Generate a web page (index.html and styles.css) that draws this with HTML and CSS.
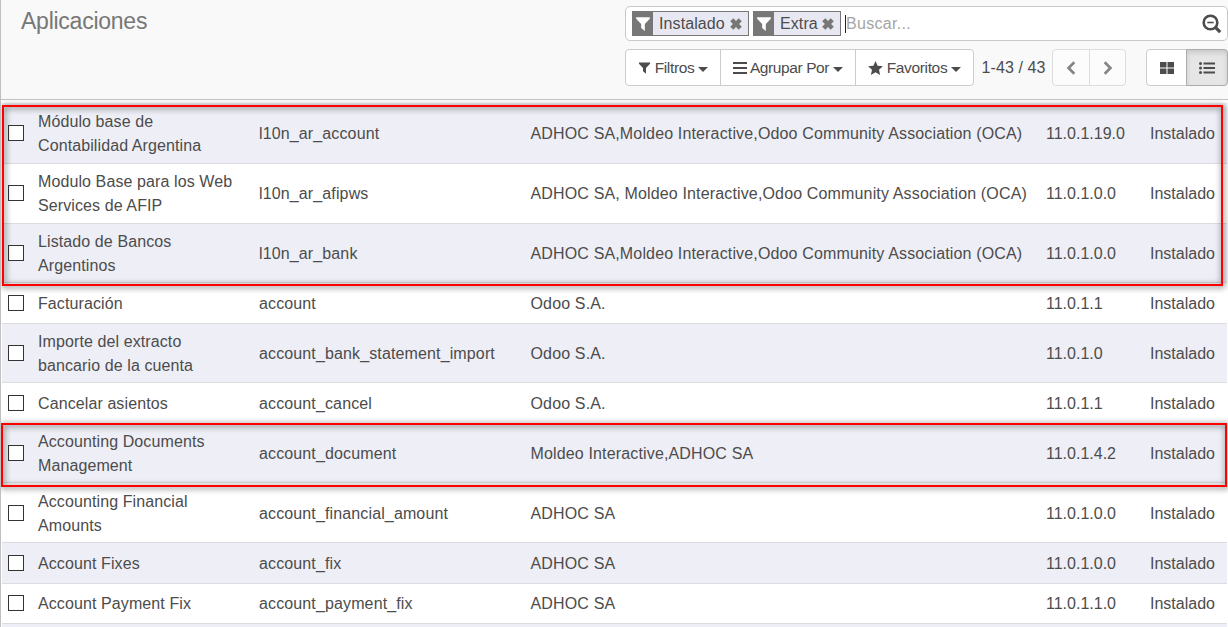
FILE: index.html
```
<!DOCTYPE html>
<html lang="es">
<head>
<meta charset="utf-8">
<title>Aplicaciones</title>
<link rel="stylesheet" href="styles.css">
</head>
<body>
<svg class="defs" width="0" height="0">
  <symbol id="funnel" viewBox="0 0 14 14"><path d="M1 1h12v1.500L8.600 7v6.200L5.400 10.600V7L1 2.500z"/></symbol>
  <symbol id="times" viewBox="0 0 12 12"><path d="M3.300.200 6 2.900 8.700.200l3.100 3.100L9.100 6l2.700 2.700-3.100 3.100L6 9.100l-2.700 2.700L.200 8.700 2.900 6 .200 3.300z"/></symbol>
</svg>
<div class="app">
  <header class="panel">
    <h1 class="title">Aplicaciones</h1>
    <div class="controls">
      <div class="search">
        <div class="facet"><span class="facet-icon"><svg width="16" height="16"><use href="#funnel"/></svg></span><span class="facet-label">Instalado</span><svg class="remove" width="12" height="12"><use href="#times"/></svg></div>
        <div class="facet extra"><span class="facet-icon"><svg width="16" height="16"><use href="#funnel"/></svg></span><span class="facet-label">Extra</span><svg class="remove" width="12" height="12"><use href="#times"/></svg></div>
        <span class="caret"></span><span class="placeholder">Buscar...</span>
        <svg class="magnifier" width="20" height="20" viewBox="0 0 20 20"><circle cx="8.500" cy="8.500" r="6.800" fill="none" stroke="currentColor" stroke-width="2.600"/><path d="M5.300 8.500h6.400" stroke="currentColor" stroke-width="1.600"/><path d="m13.400 13.400 4.800 4.800" stroke="currentColor" stroke-width="3.200"/></svg>
      </div>
      <div class="tools">
        <div class="group filters">
          <button class="btn filter"><svg width="13" height="14" viewBox="0 0 14 14"><use href="#funnel"/></svg><span>Filtros</span><i class="down"></i></button>
          <button class="btn grouping"><svg width="14" height="12" viewBox="0 0 14 12"><path d="M0 0h14v2H0zM0 5h14v2H0zM0 10h14v2H0z"/></svg><span>Agrupar Por</span><i class="down"></i></button>
          <button class="btn favorite"><svg width="15" height="14" viewBox="0 0 15 14"><path d="m7.500 0 2.100 4.700 5.300.600-3.900 3.500 1.100 5.200-4.600-2.700L2.900 14 4 8.800.100 5.300l5.300-.600z"/></svg><span>Favoritos</span><i class="down"></i></button>
        </div>
        <span class="count">1-43 / 43</span>
        <div class="group pager">
          <button class="btn"><svg width="10" height="14" viewBox="0 0 10 14"><path d="M8.300 1.300 2.600 7l5.700 5.700" fill="none" stroke="currentColor" stroke-width="2.700"/></svg></button>
          <button class="btn"><svg width="10" height="14" viewBox="0 0 10 14"><path d="M1.700 1.300 7.400 7l-5.700 5.700" fill="none" stroke="currentColor" stroke-width="2.700"/></svg></button>
        </div>
        <div class="group views">
          <button class="btn"><svg width="14" height="12" viewBox="0 0 14 12"><path d="M0 0h6.500v5.500H0zM7.500 0H14v5.500H7.500zM0 6.500h6.500V12H0zM7.500 6.500H14V12H7.500z"/></svg></button>
          <button class="btn active"><svg width="16" height="12" viewBox="0 0 16 12"><path d="M4.500.500H16v2H4.500zM4.500 5H16v2H4.500zM4.500 9.500H16v2H4.500z"/><circle cx="1.500" cy="1.500" r="1.500"/><circle cx="1.500" cy="6" r="1.500"/><circle cx="1.500" cy="10.500" r="1.500"/></svg></button>
        </div>
      </div>
    </div>
  </header>
  <main class="list">
    <div class="row"><i class="check"></i><span class="name">Módulo base de Contabilidad Argentina</span><span class="technical">l10n_ar_account</span><span class="author">ADHOC SA,Moldeo Interactive,Odoo Community Association (OCA)</span><span>11.0.1.19.0</span><span>Instalado</span></div>
    <div class="row"><i class="check"></i><span class="name">Modulo Base para los Web Services de AFIP</span><span class="technical">l10n_ar_afipws</span><span class="author">ADHOC SA, Moldeo Interactive,Odoo Community Association (OCA)</span><span>11.0.1.0.0</span><span>Instalado</span></div>
    <div class="row short"><i class="check"></i><span class="name">Listado de Bancos Argentinos</span><span class="technical">l10n_ar_bank</span><span class="author">ADHOC SA,Moldeo Interactive,Odoo Community Association (OCA)</span><span>11.0.1.0.0</span><span>Instalado</span></div>
    <div class="row single tall"><i class="check"></i><span class="name">Facturación</span><span class="technical">account</span><span class="author">Odoo S.A.</span><span>11.0.1.1</span><span>Instalado</span></div>
    <div class="row short"><i class="check"></i><span class="name">Importe del extracto bancario de la cuenta</span><span class="technical">account_bank_statement_import</span><span class="author">Odoo S.A.</span><span>11.0.1.0</span><span>Instalado</span></div>
    <div class="row single tall"><i class="check"></i><span class="name">Cancelar asientos</span><span class="technical">account_cancel</span><span class="author">Odoo S.A.</span><span>11.0.1.1</span><span>Instalado</span></div>
    <div class="row short"><i class="check"></i><span class="name">Accounting Documents Management</span><span class="technical">account_document</span><span class="author">Moldeo Interactive,ADHOC SA</span><span>11.0.1.4.2</span><span>Instalado</span></div>
    <div class="row lowered"><i class="check"></i><span class="name">Accounting Financial Amounts</span><span class="technical">account_financial_amount</span><span class="author">ADHOC SA</span><span>11.0.1.0.0</span><span>Instalado</span></div>
    <div class="row single tall"><i class="check"></i><span class="name">Account Fixes</span><span class="technical">account_fix</span><span class="author">ADHOC SA</span><span>11.0.1.0.0</span><span>Instalado</span></div>
    <div class="row single"><i class="check"></i><span class="name">Account Payment Fix</span><span class="technical">account_payment_fix</span><span class="author">ADHOC SA</span><span>11.0.1.1.0</span><span>Instalado</span></div>
    <div class="row"></div>
  </main>
  <div class="mark mark-first"></div>
  <div class="mark mark-second"></div>
</div>
</body>
</html>
```
FILE: styles.css
```
* { box-sizing: border-box; }
body { margin: 0; overflow: hidden; background: #fff; color: #4c4c4c; font: 16px/24px "Liberation Sans", Arial, sans-serif; }
svg { display: block; flex: none; fill: currentColor; }
.defs { position: absolute; }
.app { position: relative; width: 1228px; height: 627px; overflow: hidden; border-left: 1px solid #c0c0c0; }
.panel { display: flex; justify-content: space-between; height: 100px; padding-left: 20px; background: #f9f9f9; border-bottom: 1px solid #c4c4c4; }
.title { margin: 6px 0 0; color: #777; font-size: 23px; line-height: 30px; font-weight: 400; letter-spacing: -.25px; }
.controls { width: 603px; padding-top: 6px; }
.search { display: flex; align-items: center; height: 35px; padding: 0 5px 0 6px; background: #fff; border: 1px solid #c9c9c9; border-radius: 5px; }
.facet { display: flex; align-items: center; width: 117px; height: 25px; margin-right: 4px; background: #e8e8f2; border: 1px solid #777; }
.facet.extra { width: 88px; }
.facet-icon { display: flex; align-items: center; justify-content: center; width: 20px; height: 23px; background: #777; color: #fff; }
.facet-label { margin-left: 6px; letter-spacing: .1px; }
.remove { margin-left: auto; margin-right: 6px; color: #777; }
.caret { width: 1px; height: 18px; background: #222; }
.placeholder { color: #a5a5a5; letter-spacing: .3px; padding-top: 1px; }
.magnifier { margin-left: auto; }
.tools { display: flex; height: 37px; margin-top: 8px; }
.group { display: flex; background: #fff; border: 1px solid #ccc; border-radius: 4px; }
.btn { display: flex; align-items: center; justify-content: center; padding: 0; border: 0; background: none; color: #4c4c4c; font: 16px/24px "Liberation Sans", Arial, sans-serif; white-space: nowrap; }
.btn + .btn { border-left: 1px solid #ccc; }
.filters { width: 349px; }
.filters .btn { letter-spacing: -.35px; font-size: 15.500px; }
.filter { width: 94px; gap: 4px; }
.grouping { width: 135px; gap: 3px; }
.favorite { width: 118px; gap: 4px; }
.filters .btn.grouping { letter-spacing: -.4px; }
.down { border: 5px solid transparent; border-top-color: currentColor; border-bottom: 0; margin-top: 3px; }
.grouping .down { margin-left: 1px; }
.count { width: 78px; padding-left: 1px; text-align: center; line-height: 38px; letter-spacing: .1px; white-space: nowrap; }
.pager { width: 74px; border-color: #ddd; background: #fcfcfc; }
.pager .btn { width: 36px; color: #858585; }
.pager .btn + .btn { border-color: #ddd; }
.views { width: 82px; margin-left: 20px; }
.views .btn { width: 39px; }
.views .btn.active { width: 42px; margin: -1px -1px -1px 0; background: #e6e6e6; border: 1px solid #adadad; border-radius: 0 4px 4px 0; box-shadow: inset 0 3px 5px rgba(0, 0, 0, .125); }
.list { width: 1225px; margin-left: 1px; padding-top: 3px; }
.row { display: grid; grid-template-columns: 30px 221px 272px 515px 104px 77px; align-items: center; height: 60px; padding-left: 6px; border-top: 1px solid #dcdce0; white-space: nowrap; }
.row:first-child { border-top-color: transparent; }
.row:nth-child(odd) { background: #eeeef6; }
.row.short { height: 59px; }
.row.single { height: 40px; }
.row.single.tall { height: 41px; }
.row span { padding-top: 1px; }
.row.lowered span { padding-top: 2px; }
.row.short span, .row.tall span { padding-top: 2px; }
.name { width: 206px; white-space: normal; letter-spacing: .1px; }
.technical { letter-spacing: .13px; }
.author { margin-left: -.5px; letter-spacing: .15px; }
.check { width: 16px; height: 16px; background: #fff; border: 1px solid #333; }
.row:not(.short, .tall, .lowered) .check { margin-bottom: 1px; }
.mark { position: absolute; border: 2px solid #f00; filter: drop-shadow(1px 1px 3px rgba(0, 0, 0, .8)); }
.mark-first { left: 1px; top: 105px; width: 1221px; height: 181px; }
.mark-second { left: 0; top: 423px; width: 1226px; height: 64px; }
```
